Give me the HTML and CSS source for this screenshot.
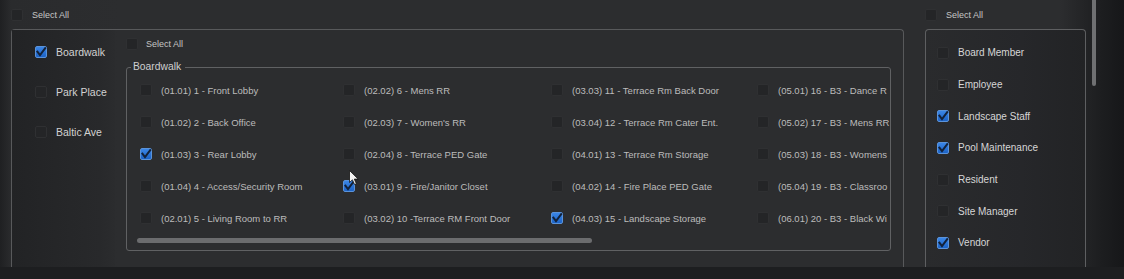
FILE: index.html
```html
<!DOCTYPE html>
<html lang="en">

<head>
    <meta charset="UTF-8">
    <title>Access Groups</title>
    <link rel="stylesheet" href="styles.css">
</head>

<body>
    <div class="screen">
        <div class="stage">
            <!-- doors -->
            <div class="col-left">
                <label class="top-row"><span class="cb"></span><span class="lbl">Select All</span></label>
                <div class="panel">
                    <ul class="sites">
                        <li><span class="cb on"><svg viewBox="0 0 12 12"><path d="M2.4 5.6 L5 9 L10.2 2.2"/></svg></span>Boardwalk</li>
                        <li><span class="cb"></span>Park Place</li>
                        <li><span class="cb"></span>Baltic Ave</li>
                    </ul>
                    <div class="doors">
                        <label class="sub-row"><span class="cb"></span><span class="lbl">Select All</span></label>
                        <fieldset class="group">
                            <legend>Boardwalk</legend>
                            <div class="grid">
                                <div class="door"><span class="cb"></span>(01.01) 1 - Front Lobby</div>
                                <div class="door"><span class="cb"></span>(02.02) 6 - Mens RR</div>
                                <div class="door"><span class="cb"></span>(03.03) 11 - Terrace Rm Back Door</div>
                                <div class="door"><span class="cb"></span>(05.01) 16 - B3 - Dance R</div>

                                <div class="door"><span class="cb"></span>(01.02) 2 - Back Office</div>
                                <div class="door"><span class="cb"></span>(02.03) 7 - Women's RR</div>
                                <div class="door"><span class="cb"></span>(03.04) 12 - Terrace Rm Cater Ent.</div>
                                <div class="door"><span class="cb"></span>(05.02) 17 - B3 - Mens RR</div>

                                <div class="door"><span class="cb on"><svg viewBox="0 0 12 12"><path d="M2.4 5.6 L5 9 L10.2 2.2"/></svg></span>(01.03) 3 - Rear Lobby</div>
                                <div class="door"><span class="cb"></span>(02.04) 8 - Terrace PED Gate</div>
                                <div class="door"><span class="cb"></span>(04.01) 13 - Terrace Rm Storage</div>
                                <div class="door"><span class="cb"></span>(05.03) 18 - B3 - Womens</div>

                                <div class="door"><span class="cb"></span>(01.04) 4 - Access/Security Room</div>
                                <div class="door"><span class="cb on"><svg viewBox="0 0 12 12"><path d="M2.4 5.6 L5 9 L10.2 2.2"/></svg></span>(03.01) 9 - Fire/Janitor Closet</div>
                                <div class="door"><span class="cb"></span>(04.02) 14 - Fire Place PED Gate</div>
                                <div class="door"><span class="cb"></span>(05.04) 19 - B3 - Classroo</div>

                                <div class="door"><span class="cb"></span>(02.01) 5 - Living Room to RR</div>
                                <div class="door"><span class="cb"></span>(03.02) 10 -Terrace RM Front Door</div>
                                <div class="door"><span class="cb on"><svg viewBox="0 0 12 12"><path d="M2.4 5.6 L5 9 L10.2 2.2"/></svg></span>(04.03) 15 - Landscape Storage</div>
                                <div class="door"><span class="cb"></span>(06.01) 20 - B3 - Black Wi</div>
                            </div>
                            <div class="hscroll"></div>
                        </fieldset>
                    </div>
                </div>
            </div>

            <!-- roles -->
            <div class="col-right">
                <label class="top-row"><span class="cb"></span><span class="lbl">Select All</span></label>
                <div class="panel roles">
                    <ul>
                        <li><span class="cb"></span>Board Member</li>
                        <li><span class="cb"></span>Employee</li>
                        <li><span class="cb on"><svg viewBox="0 0 12 12"><path d="M2.4 5.6 L5 9 L10.2 2.2"/></svg></span>Landscape Staff</li>
                        <li><span class="cb on"><svg viewBox="0 0 12 12"><path d="M2.4 5.6 L5 9 L10.2 2.2"/></svg></span>Pool Maintenance</li>
                        <li><span class="cb"></span>Resident</li>
                        <li><span class="cb"></span>Site Manager</li>
                        <li><span class="cb on"><svg viewBox="0 0 12 12"><path d="M2.4 5.6 L5 9 L10.2 2.2"/></svg></span>Vendor</li>
                    </ul>
                </div>
            </div>

            <div class="vscroll"><div class="thumb"></div></div>
        </div>

        <svg class="cursor" viewBox="0 0 10 16" width="10" height="16">
            <path d="M0.5 0.5 L0.5 12.5 L3.4 9.8 L5.6 14.6 L7.4 13.8 L5.3 9.1 L9.2 9.1 Z" fill="#f2f2f2" stroke="#111" stroke-width="0.8"/>
        </svg>
    </div>
</body>

</html>
```

FILE: styles.css
```css
body {
    margin: 0;
    background: #1e1f21;
}
ul {
    padding: 0;
    margin: 0;
    list-style: none;
}
.screen {
    width: 1124px;
    height: 279px;
    position: relative;
    overflow: hidden;
    background: #1d1e20;
    font-family: "Liberation Sans", Arial, sans-serif;
    color: #cfcfcf;
}
.stage {
    height: 267px;
    overflow: hidden;
    display: flex;
    padding-left: 11px;
    background: linear-gradient(to right, #1f2022 0px, #2a2b2d 11px, #2c2d2f 120px, #2c2d2f 1060px, #1d1e20 1100px, #161719 1124px);
}

/* checkbox */
.cb {
    width: 12px;
    height: 12px;
    box-sizing: border-box;
    border: 1px solid #2f3032;
    border-radius: 2px;
    background: #242527;
    flex: none;
    display: inline-flex;
}
.cb.on {
    background: linear-gradient(#3a86e6, #1c63c6);
    border-color: #5b93da;
}
.cb svg {
    width: 12px;
    height: 12px;
    margin: -1px;
}
.cb svg path {
    fill: none;
    stroke: #13223a;
    stroke-width: 2;
    stroke-linecap: square;
}

.top-row {
    height: 29px;
    display: flex;
    align-items: center;
    gap: 9px;
    font-size: 9px;
    color: #c6c6c6;
}

.col-left {
    width: 893px;
    flex: none;
}
.panel {
    height: 260px;
    border: 1px solid #58595b;
    border-bottom: none;
    border-radius: 4px 4px 0 0;
    display: flex;
}
.sites {
    width: 103px;
    padding-top: 2px;
    background: linear-gradient(to right, #222325, #28292b 85%, #2b2c2e);
}
.sites li {
    height: 40px;
    display: flex;
    align-items: center;
    padding-left: 23px;
    gap: 9px;
    font-size: 10.5px;
    color: #d2d2d2;
}

.doors {
    flex: 1;
    padding-left: 11px;
}
.sub-row {
    height: 28px;
    display: flex;
    align-items: center;
    gap: 8px;
    font-size: 9px;
    color: #c4c4c4;
}
.group {
    margin: 3px 0 0;
    width: 765px;
    box-sizing: border-box;
    border: 1px solid #606163;
    border-radius: 3px;
    padding: 1px 0 7px;
    min-width: 0;
}
.group legend {
    font-size: 10.3px;
    line-height: 12px;
    color: #cfcfcf;
    padding: 0 4px 0 2px;
    margin-left: 4px;
}
.grid {
    display: grid;
    grid-template-columns: 203px 208px 206px 132px;
    padding-left: 13px;
    overflow: hidden;
}
.door {
    height: 32px;
    display: flex;
    align-items: center;
    gap: 9px;
    font-size: 9.5px;
    color: #bcbcbc;
    white-space: nowrap;
}
.hscroll {
    margin: 4px 0 0 10px;
    width: 455px;
    height: 5px;
    border-radius: 3px;
    background: #6b6c6e;
}

.col-right {
    width: 161px;
    margin-left: 21px;
    flex: none;
}
.roles {
    background: linear-gradient(to right, #2a2b2d, #26272a 60%, #222325);
    border-color: #5e5f61;
}
.roles ul {
    padding: 7px 0 0 11px;
}
.roles li {
    height: 31.7px;
    display: flex;
    align-items: center;
    gap: 9px;
    font-size: 10px;
    color: #d6d6d6;
}

.vscroll {
    width: 12px;
    margin-left: 6px;
    flex: none;
}
.vscroll .thumb {
    width: 4px;
    height: 86px;
    border-radius: 0 0 2px 2px;
    background: #6f7072;
}

.cursor {
    position: absolute;
    left: 349px;
    top: 170px;
}
```
